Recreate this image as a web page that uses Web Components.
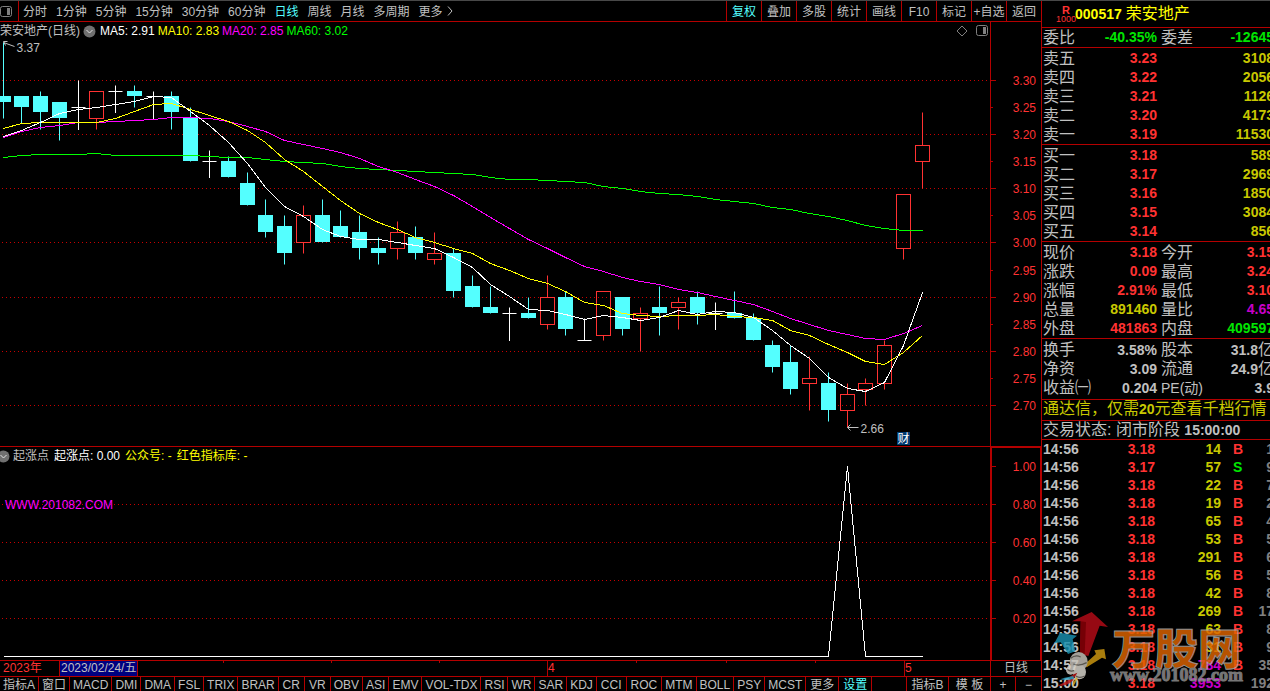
<!DOCTYPE html>
<html lang="zh-CN">
<head>
<meta charset="utf-8">
<title>荣安地产 000517</title>
<style>
  :root {
    --line: #b40000;
    --red: #ff3232;
    --green: #00e600;
    --yellow: #c8c800;
    --cyan: #54ffff;
    --magenta: #c800c8;
    --text: #c0c0c0;
  }
  body {
    margin: 0;
    background: #000;
    color: var(--text);
    font: 12px/16px "Liberation Sans", "Noto Sans CJK SC", sans-serif;
  }
</style>
</head>
<body>
<trade-desk>
  <top-toolbar slot="toolbar"></top-toolbar>
  <price-chart slot="price"></price-chart>
  <signal-chart slot="signal"></signal-chart>
  <date-axis slot="dates"></date-axis>
  <indicator-tabs slot="tabs"></indicator-tabs>
  <quote-panel slot="quote"></quote-panel>
  <site-watermark slot="mark"></site-watermark>
</trade-desk>

<script>
// open, high, low, close
const CANDLES = [
  [3.27, 3.37, 3.23, 3.26], [3.27, 3.27, 3.22, 3.25], [3.27, 3.28, 3.21, 3.24], [3.26, 3.26, 3.19, 3.23],
  [3.25, 3.30, 3.21, 3.25], [3.23, 3.28, 3.21, 3.28], [3.28, 3.29, 3.24, 3.28], [3.28, 3.29, 3.25, 3.27],
  [3.27, 3.28, 3.23, 3.27], [3.27, 3.28, 3.21, 3.24], [3.23, 3.25, 3.15, 3.15], [3.15, 3.17, 3.12, 3.15],
  [3.15, 3.16, 3.12, 3.12], [3.11, 3.13, 3.07, 3.07], [3.05, 3.08, 3.01, 3.02], [3.03, 3.05, 2.96, 2.98],
  [3.00, 3.07, 2.98, 3.05], [3.05, 3.08, 3.00, 3.00], [3.03, 3.06, 3.01, 3.01], [3.02, 3.05, 2.97, 2.99],
  [2.99, 3.01, 2.96, 2.98], [2.99, 3.04, 2.97, 3.02], [3.01, 3.03, 2.97, 2.98], [2.97, 3.02, 2.96, 2.98],
  [2.98, 2.99, 2.90, 2.91], [2.92, 2.94, 2.88, 2.88], [2.88, 2.92, 2.87, 2.87], [2.87, 2.88, 2.82, 2.87],
  [2.87, 2.90, 2.86, 2.86], [2.85, 2.94, 2.84, 2.90], [2.90, 2.91, 2.83, 2.84], [2.82, 2.86, 2.82, 2.82],
  [2.83, 2.91, 2.82, 2.91], [2.90, 2.90, 2.83, 2.84], [2.86, 2.88, 2.80, 2.87], [2.88, 2.92, 2.83, 2.87],
  [2.88, 2.90, 2.84, 2.89], [2.90, 2.91, 2.85, 2.87], [2.87, 2.89, 2.84, 2.87], [2.87, 2.91, 2.86, 2.86],
  [2.86, 2.87, 2.82, 2.82], [2.81, 2.82, 2.76, 2.77], [2.78, 2.81, 2.72, 2.73], [2.74, 2.79, 2.69, 2.75],
  [2.74, 2.76, 2.67, 2.69], [2.69, 2.74, 2.66, 2.72], [2.73, 2.75, 2.70, 2.74], [2.74, 2.82, 2.73, 2.81],
  [2.99, 3.09, 2.97, 3.09], [3.15, 3.24, 3.10, 3.18],
];

// averages whose window starts before the first visible candle
const MA5_HEAD = [3.196, 3.207, 3.222, 3.239];
const MA10_HEAD = [3.212, 3.220, 3.222, 3.222, 3.222, 3.223, 3.230, 3.243, 3.255];
const MA20_HEAD = [3.195, 3.205, 3.213, 3.217, 3.222, 3.223, 3.225, 3.226, 3.228, 3.232,
  3.231, 3.229, 3.225, 3.215, 3.205, 3.190, 3.182, 3.175, 3.167];
const MA60 = [3.158, 3.162, 3.163, 3.163, 3.163, 3.165, 3.162, 3.162, 3.162, 3.162,
  3.162, 3.160, 3.158, 3.157, 3.155, 3.151, 3.149, 3.146, 3.142, 3.138,
  3.135, 3.133, 3.132, 3.131, 3.129, 3.126, 3.121, 3.118, 3.117, 3.116,
  3.114, 3.111, 3.105, 3.100, 3.095, 3.092, 3.090, 3.085, 3.081, 3.077,
  3.072, 3.066, 3.061, 3.055, 3.048, 3.041, 3.033, 3.026, 3.023, 3.023];

const AXIS_WIDTH = 51;

function average(n, head) {
  return CANDLES.map((c, i) => {
    if (i < n - 1) return head[i];
    let sum = 0;
    for (let k = i - n + 1; k <= i; k++) sum += CANDLES[k][3];
    return sum / n;
  });
}

// centre of candle i for a plot that is `width` wide
function candleX(i, width) {
  return Math.floor(3.2 + i * (width - 71) / 49) + 0.5;
}

class TradeDesk extends HTMLElement {
  constructor() {
    super();
    this.attachShadow({ mode: "open" });
    this.shadowRoot.innerHTML = `
      <style>
        :host {
          display: grid;
          position: relative;
          height: 100vh;
          overflow: hidden;
          box-sizing: border-box;
          border-top: 1px solid #484848;
          grid-template-columns: minmax(0, 1fr) 229px;
        }
        .left {
          display: grid;
          min-height: 0;
          height: calc(100vh - 1px);
          grid-template-rows: 21px minmax(0, 425fr) minmax(0, 213fr) 16px 15px;
        }
      </style>
      <div class="left">
        <slot name="toolbar"></slot>
        <slot name="price"></slot>
        <slot name="signal"></slot>
        <slot name="dates"></slot>
        <slot name="tabs"></slot>
      </div>
      <slot name="quote"></slot>
      <slot name="mark"></slot>
    `;
  }
}
customElements.define("trade-desk", TradeDesk);

class TopToolbar extends HTMLElement {
  constructor() {
    super();
    this.attachShadow({ mode: "open" });
    const periods = ["分时", "1分钟", "5分钟", "15分钟", "30分钟", "60分钟", "日线", "周线", "月线", "多周期", "更多"];
    const tools = ["复权", "叠加", "多股", "统计", "画线", "F10", "标记", "+自选", "返回"];
    this.shadowRoot.innerHTML = `
      <style>
        :host { display: flex; box-sizing: border-box; border-bottom: 1px solid var(--line); }
        button { border: 0; padding: 1px 0 0; background: none; color: inherit; font: inherit; white-space: nowrap; }
        .layout { width: 19px; box-sizing: border-box; text-align: left; border-right: 1px solid var(--line); }
        .layout svg { display: block; }
        .periods { display: flex; gap: 9px; padding-left: 4px; align-items: center; }
        .periods svg { margin-left: -6px; }
        .tools { display: flex; margin-left: auto; }
        .tools button { width: 35px; box-sizing: border-box; border-left: 1px solid var(--line); }
        .on { color: var(--cyan); }
      </style>
      <button class="layout" aria-label="布局">
        <svg width="13" height="13"><rect x=".5" y="1.5" width="11" height="10" rx="2" fill="none" stroke="#808080"/><rect x="7" y="3" width="3" height="7" fill="#808080"/></svg>
      </button>
      <div class="periods">
        ${periods.map(p => `<button class="${p === "日线" ? "on" : ""}">${p}</button>`).join("")}
        <svg width="8" height="12"><path d="M2 1.5L6 6L2 10.5" fill="none" stroke="#c0c0c0"/></svg>
      </div>
      <div class="tools">
        ${tools.map(t => `<button class="${t === "复权" ? "on" : ""}">${t}</button>`).join("")}
      </div>
    `;
  }
}
customElements.define("top-toolbar", TopToolbar);

// shared base: an svg under a legend, redrawn when its box changes
class ChartPane extends HTMLElement {
  constructor() {
    super();
    this.attachShadow({ mode: "open" });
    this.shadowRoot.innerHTML = `
      <style>
        :host { display: grid; grid-template: minmax(0, 1fr) / minmax(0, 1fr); overflow: hidden; box-sizing: border-box; }
        svg.plot { grid-area: 1 / 1; width: 100%; height: 100%; display: block; }
        svg.plot text { font-size: 12px; }
        .legend { grid-area: 1 / 1; align-self: start; display: flex; gap: 3px; height: 18px; align-items: center; white-space: nowrap; z-index: 1; }
        button { border: 0; padding: 0; background: none; display: block; }
        button svg { display: block; }
        ${this.css()}
      </style>
      <svg class="plot"></svg>
      <div class="legend">${this.legend()}</div>
    `;
    this.plot = this.shadowRoot.querySelector(".plot");
  }

  css() { return ""; }

  connectedCallback() {
    this.redraw();
    this.observer = new ResizeObserver(() => this.redraw());
    this.observer.observe(this);
  }

  disconnectedCallback() {
    this.observer.disconnect();
  }

  redraw() {
    const w = this.clientWidth;
    const h = this.clientHeight;
    if (w && h) this.plot.innerHTML = this.draw(w - AXIS_WIDTH, h);
  }

  scale(top, bottom, h) {
    return v => Math.floor((top - v) / (top - bottom) * h) + 0.5;
  }

  grid(y, w) {
    return `<path d="M2 ${y}H${w}" stroke="#c80000" stroke-dasharray="1 3" shape-rendering="crispEdges"/>`;
  }

  label(v, y, w) {
    return `<text x="${w + 46}" y="${y + 4}" text-anchor="end" fill="#ff3232">${v.toFixed(2)}</text>`;
  }

  line(values, y, w, color) {
    const pts = values.map((v, i) => `${candleX(i, w)},${y(v)}`).join(" ");
    return `<polyline points="${pts}" fill="none" stroke="${color}" shape-rendering="crispEdges"/>`;
  }
}

const FOLD = `<button aria-label="展开"><svg width="13" height="13"><circle cx="6.5" cy="6.5" r="6" fill="#707070"/><path d="M3.5 5L6.5 8L9.5 5" fill="none" stroke="#e0e0e0"/></svg></button>`;

class PriceChart extends ChartPane {
  css() {
    return `
      :host { border-bottom: 1px solid var(--line); }
      .name { width: 80px; }
      .legend button { margin-right: 1px; }
      .icons { display: flex; gap: 7px; margin-left: auto; margin-right: 52px; }
    `;
  }

  legend() {
    return `
      <span class="name">荣安地产(日线)</span>${FOLD}
      <span style="color:#fff">MA5: 2.91</span>
      <span style="color:#ff0">MA10: 2.83</span>
      <span style="color:#f0f">MA20: 2.85</span>
      <span style="color:#0f0">MA60: 3.02</span>
      <span class="icons">
        <button aria-label="标记"><svg width="12" height="12"><path d="M6 1L11 6L6 11L1 6Z" fill="none" stroke="#808080"/></svg></button>
        <button aria-label="侧栏"><svg width="12" height="12"><rect x=".5" y=".5" width="11" height="10" rx="2" fill="none" stroke="#808080"/><rect x="7" y="2" width="3" height="7" fill="#808080"/></svg></button>
      </span>
    `;
  }

  draw(w, h) {
    const y = this.scale(3.408, 2.6252, h);
    let out = "";

    for (let n = 0; n <= 12; n++) {
      const v = 3.3 - n * 0.05;
      const py = y(v);
      const major = n % 2 === 0;
      if (major) out += this.grid(py, w);
      out += `<path d="M${w} ${py}h${major ? 6 : 3}" stroke="#b40000"/>`;
      out += this.label(v, py, w);
    }
    out += `<path d="M${w + 0.5} 0V${h}" stroke="#b40000"/>`;

    CANDLES.forEach(([open, high, low, close], i) => {
      const x = candleX(i, w);
      const a = y(Math.max(open, close));
      const b = y(Math.min(open, close));
      if (open === close) {
        out += `<path d="M${x} ${y(high)}V${y(low) + 0.5}M${x - 7} ${a}h14" stroke="#fff"/>`;
      } else if (close > open) {
        out += `<path d="M${x} ${y(high)}V${a}M${x} ${b}V${y(low)}" stroke="#ff3232"/>`;
        out += `<rect x="${x - 7}" y="${a}" width="14" height="${b - a}" fill="none" stroke="#ff3232"/>`;
      } else {
        out += `<path d="M${x} ${y(high)}V${y(low)}" stroke="#54ffff"/>`;
        out += `<rect x="${x - 7.5}" y="${a - 0.5}" width="15" height="${b - a}" fill="#54ffff"/>`;
      }
    });

    out += this.line(MA60, y, w, "#0f0");
    out += this.line(average(20, MA20_HEAD), y, w, "#f0f");
    out += this.line(average(10, MA10_HEAD), y, w, "#ff0");
    out += this.line(average(5, MA5_HEAD), y, w, "#fff");

    // highest and lowest price marks
    const hx = candleX(0, w), hy = y(3.37);
    const lx = candleX(45, w), ly = y(2.66);
    out += `<path d="M${hx} ${hy}l11 4M${hx + 4} ${hy - 1}h-4l2 4" fill="none" stroke="#c0c0c0"/>`;
    out += `<text x="${hx + 13}" y="${hy + 9}" fill="#c0c0c0">3.37</text>`;
    out += `<path d="M${lx} ${ly}h11M${lx + 3} ${ly - 3}l-3 3l3 3" fill="none" stroke="#c0c0c0"/>`;
    out += `<text x="${lx + 13}" y="${ly + 5}" fill="#c0c0c0">2.66</text>`;

    const bx = candleX(48, w) - 6.5;
    out += `<rect x="${bx}" y="${h - 14}" width="13" height="13" fill="#003a70"/>`;
    out += `<text x="${bx + 0.5}" y="${h - 3}" fill="#fff">财</text>`;
    return out;
  }
}
customElements.define("price-chart", PriceChart);

class SignalChart extends ChartPane {
  css() {
    return `.legend { margin-left: -3px; gap: 5px; } .legend button { margin-right: -2px; }`;
  }

  legend() {
    return `${FOLD}
      <span>起涨点</span>
      <span style="color:#fff">起涨点: 0.00</span>
      <span style="color:#ff0">公众号: -</span>
      <span style="color:#ff0">红色指标库: -</span>
    `;
  }

  draw(w, h) {
    const y = this.scale(1.1026, -0.0184, h);
    let out = "";
    for (const v of [1, 0.8, 0.6, 0.4, 0.2]) {
      if (v < 1) out += this.grid(y(v), w);
      out += `<path d="M${w} ${y(v)}h6" stroke="#b40000"/>`;
      out += this.label(v, y(v), w);
    }
    out += `<path d="M${w} .5h51M${w + 50.5} 0V${h}" stroke="#b40000"/>`;
    out += `<path d="M${w + 1} 0V${h}" stroke="#b40000" stroke-width="2"/>`;
    out += `<text x="5" y="${y(0.8) + 4}" fill="#f0f">WWW.201082.COM</text>`;
    out += this.line(CANDLES.map((c, i) => i === 45 ? 1 : 0), y, w, "#fff");
    return out;
  }
}
customElements.define("signal-chart", SignalChart);

class DateAxis extends HTMLElement {
  constructor() {
    super();
    this.attachShadow({ mode: "open" });
    this.shadowRoot.innerHTML = `
      <style>
        :host { display: grid; grid-template-columns: minmax(0, 1fr) 51px; box-sizing: border-box; border-top: 1px solid var(--line); overflow: hidden; line-height: 15px; }
        .track { display: grid; grid-template-columns: 59fr 164fr 108fr 108fr 108fr 89fr 90fr 89fr 89fr 86fr; color: var(--red); }
        .track span { white-space: nowrap; background: linear-gradient(var(--line), var(--line)) 0 0 / 1px 2px no-repeat; }
        .track .month { border-left: 1px solid var(--line); background: none; }
        .track .year { background: none; padding-left: 3px; }
        .track .cursor { background: none; color: var(--text); }
        time { display: inline-block; background: #000080; padding: 0 1px; border: solid var(--line); border-width: 0 1px; }
        button { border: 0; border-left: 1px solid var(--line); padding: 0; background: none; color: inherit; font: inherit; line-height: 15px; }
      </style>
      <div class="track">
        <span class="year">2023年</span>
        <span class="cursor"><time datetime="2023-02-24">2023/02/24/五</time></span>
        <span></span><span></span><span></span>
        <span class="month">4</span>
        <span></span><span></span><span></span>
        <span class="month">5</span>
      </div>
      <button>日线</button>
    `;
  }
}
customElements.define("date-axis", DateAxis);

class IndicatorTabs extends HTMLElement {
  constructor() {
    super();
    this.attachShadow({ mode: "open" });
    const names = ["指标A", "窗口", "MACD", "DMI", "DMA", "FSL", "TRIX", "BRAR", "CR", "VR", "OBV", "ASI", "EMV",
      "VOL-TDX", "RSI", "WR", "SAR", "KDJ", "CCI", "ROC", "MTM", "BOLL", "PSY", "MCST", "更多", "设置"];
    this.shadowRoot.innerHTML = `
      <style>
        :host { display: flex; box-sizing: border-box; border-top: 1px solid var(--line); overflow: hidden; }
        button { flex: none; box-sizing: border-box; min-width: 26px; border: 0; border-right: 1px solid var(--line); padding: 0 3px; background: none; color: inherit; font: inherit; height: 16px; white-space: nowrap; }
        button:first-child { padding-left: 1px; }
        .roomy { padding: 0 4px; }
        .on { color: var(--cyan); }
        .right { display: flex; margin-left: auto; border-left: 1px solid var(--line); }
        .right button { width: 42px; padding: 0; }
        .right .step { width: 25px; min-width: 0; }
        .right button:last-child { border: 0; }
      </style>
      ${names.map(n => `<button class="${/更多|设置|ROC|CCI/.test(n) ? "roomy" : ""} ${n === "设置" ? "on" : ""}">${n}</button>`).join("")}
      <div class="right">
        <button>指标B</button><button>模 板</button>
        <button class="step">+</button><button class="step">−</button>
      </div>
    `;
  }
}
customElements.define("indicator-tabs", IndicatorTabs);

const ASKS = [["卖五", "3.23", "3108"], ["卖四", "3.22", "2056"], ["卖三", "3.21", "1126"], ["卖二", "3.20", "4173"], ["卖一", "3.19", "11530"]];
const BIDS = [["买一", "3.18", "589"], ["买二", "3.17", "2969"], ["买三", "3.16", "1850"], ["买四", "3.15", "3084"], ["买五", "3.14", "856"]];
// label, value, class, label, value, class
const STATS = [
  ["现价", "3.18", "r", "今开", "3.15", "r"],
  ["涨跌", "0.09", "r", "最高", "3.24", "r"],
  ["涨幅", "2.91%", "r", "最低", "3.10", "r"],
  ["总量", "891460", "y", "量比", "4.65", "m"],
  ["外盘", "481863", "r", "内盘", "409597", "g"],
];
const BASICS = [
  ["换手", "3.58%", "", "股本", "31.8<i>亿</i>", ""],
  ["净资", "3.09", "", "流通", "24.9<i>亿</i>", ""],
  ["收益㈠", "0.204", "", "<small>PE(动)</small>", "3.9", ""],
];
const TRADES = [
  ["14:56", "3.18", "14", "B", "1"], ["14:56", "3.17", "57", "S", "9"], ["14:56", "3.18", "22", "B", "7"],
  ["14:56", "3.18", "19", "B", "2"], ["14:56", "3.18", "65", "B", "4"], ["14:56", "3.18", "53", "B", "5"],
  ["14:56", "3.18", "291", "B", "6"], ["14:56", "3.18", "56", "B", "5"], ["14:56", "3.18", "42", "B", "8"],
  ["14:56", "3.18", "269", "B", "17"], ["14:56", "3.18", "63", "B", "8"], ["14:56", "3.18", "31", "B", "9"],
  ["14:57", "3.18", "784", "B", "35"], ["15:00", "3.18", "3953", "", "192"],
];

class QuotePanel extends HTMLElement {
  constructor() {
    super();
    this.attachShadow({ mode: "open" });
    const depth = rows => rows.map(([k, p, v]) =>
      `<tr><th>${k}</th><td class="r">${p}</td><th></th><td class="y">${v}</td></tr>`).join("");
    const pairs = rows => rows.map(([a, b, c, d, e, f]) =>
      `<tr><th>${a}</th><td class="${c}">${b}</td><th>${d}</th><td class="${f}">${e}</td></tr>`).join("");
    const cols = `<colgroup><col style="width:50px"><col style="width:65px"><col style="width:44px"><col></colgroup>`;

    this.shadowRoot.innerHTML = `
      <style>
        :host { display: block; min-width: 0; overflow: hidden; border-left: 1px solid var(--line); font-size: 16px; white-space: nowrap; }
        .inner { width: 232px; }
        h1, p { margin: 0; box-sizing: border-box; border-bottom: 1px solid var(--line); font-size: 16px; font-weight: 400; }
        h1 { display: flex; height: 27px; align-items: center; padding-left: 14px; gap: 4px; color: #ff0; }
        .rank { display: grid; justify-items: center; color: var(--red); font-size: 9px; line-height: 8px; margin-right: -5px; }
        .rank b { font-size: 11px; line-height: 10px; }
        b, td { font-size: 14px; font-weight: 700; }
        table { width: 100%; table-layout: fixed; border-collapse: collapse; }
        section { border-bottom: 1px solid var(--line); padding-top: 1px; }
        section.flat { padding: 0; }
        section.basics { padding-bottom: 2px; }
        tr { height: 19px; }
        th, td { padding: 0; line-height: 19px; height: 19px; vertical-align: middle; }
        i { font-style: normal; font-weight: 400; font-size: 16px; line-height: 0; }
        small { font-size: 14px; line-height: 0; }
        th { font-weight: 400; text-align: left; padding-left: 1px; overflow: visible; }
        th:nth-child(3) { padding-left: 4px; }
        td { text-align: right; }
        .r { color: var(--red); }
        .g { color: var(--green); }
        .y { color: var(--yellow); }
        .m { color: var(--magenta); }
        p { padding-left: 1px; }
        .ad { height: 21px; line-height: 18px; }
        .ad a { color: var(--yellow); text-decoration: none; }
        .state { height: 19px; line-height: 17px; }
        .basics tr, .basics th, .basics td { line-height: 18px; }
        .tape tr, .tape td { height: 18px; line-height: 18px; }
        .tape td:first-child { text-align: left; padding-left: 1px; }
        .tape td:nth-child(4) { text-align: left; padding-left: 12px; }
        .tape td:last-child { color: #808080; }
      </style>
      <div class="inner">
        <h1><span class="rank"><b>R</b>1000</span><b>000517</b>荣安地产</h1>
        <section class="flat"><table>${cols}${pairs([["委比", "-40.35%", "g", "委差", "-12645", "g"]])}</table></section>
        <section><table>${cols}${depth(ASKS)}</table></section>
        <section><table>${cols}${depth(BIDS)}</table></section>
        <section><table>${cols}${pairs(STATS)}</table></section>
        <section class="basics"><table>${cols}${pairs(BASICS)}</table></section>
        <p class="ad"><a href="#level2">通达信，仅需<b>20</b>元查看千档行情</a></p>
        <p class="state">交易状态: 闭市阶段 <b>15:00:00</b></p>
        <table class="tape">
          <colgroup><col style="width:48px"><col style="width:65px"><col style="width:66px"><col style="width:24px"><col></colgroup>
          ${TRADES.map(([t, p, v, s, n]) => `<tr><td>${t}</td><td class="r">${p}</td><td class="${+v > 500 ? "m" : "y"}">${v}</td><td class="${s === "S" ? "g" : "r"}">${s}</td><td>${n}</td></tr>`).join("")}
        </table>
      </div>
    `;
  }
}
customElements.define("quote-panel", QuotePanel);

class SiteWatermark extends HTMLElement {
  constructor() {
    super();
    this.attachShadow({ mode: "open" });
    this.shadowRoot.innerHTML = `
      <style>
        /* floats over the tape in the lower right corner */
        :host { position: absolute; right: 27px; bottom: 2px; display: flex; align-items: flex-end; opacity: .82; pointer-events: none; }
        svg { display: block; }
        .words { display: grid; justify-items: center; padding-bottom: 5px; }
        .cn { font: 900 43px/40px "Noto Sans CJK SC", sans-serif; color: #e06400; -webkit-text-stroke: 1px #b0b0b0; }
        .url { font: 700 18px/18px "Liberation Serif", serif; color: #909090; -webkit-text-stroke: 1px #909090; }
      </style>
      <svg width="57" height="79" viewBox="39 510 171 237">
        <path d="M155 516L204 561L179 557L145 648L120 642L122 544L96 544Z" fill="#b80c18"/>
        <path d="M122 544L138 546L134 645L120 642Z" fill="#900008"/>
        <path d="M60 578L111 587L98 598L106 634L84 642L62 607L43 610Z" fill="#1890b0"/>
        <path d="M193 627L198 658L186 653L140 682L132 674L168 642L163 631Z" fill="#d09a10"/>
        <ellipse cx="116" cy="665" rx="27" ry="29" fill="#c8c4bc"/>
        <ellipse cx="118" cy="696" rx="20" ry="22" fill="#dcd8d0"/>
        <ellipse cx="92" cy="690" rx="14" ry="14" fill="#d4d0c8"/>
        <path d="M92 655q14 -12 30 -4M100 672q18 8 40 -4M82 688q8 8 20 4M108 708q10 8 26 0" fill="none" stroke="#6c6860" stroke-width="4"/>
        <path d="M112 698Q88 705 82 722L52 738Q84 738 98 722Z" fill="#c01818"/>
        <path d="M100 708Q76 712 60 718Q82 722 102 716Z" fill="#38a8c8"/>
        <path d="M108 712Q98 730 96 744Q108 730 112 714Z" fill="#e0b020"/>
      </svg>
      <div class="words"><span class="cn">万股网</span><span class="url">www.201082.com</span></div>
    `;
  }
}
customElements.define("site-watermark", SiteWatermark);
</script>
</body>
</html>
